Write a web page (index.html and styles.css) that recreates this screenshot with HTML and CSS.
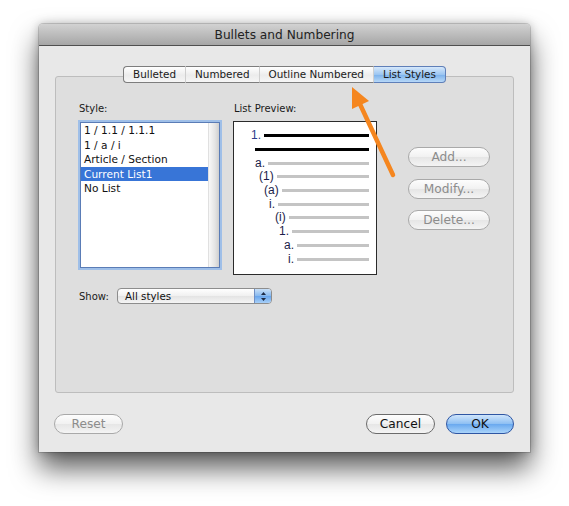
FILE: index.html
```html
<!DOCTYPE html>
<html lang="en">
<head>
    <meta charset="UTF-8">
    <title>Bullets and Numbering</title>
    <link rel="stylesheet" href="styles.css">
</head>
<body>

<div class="window">
    <div class="titlebar">Bullets and Numbering</div>
    <div class="content">
        <div class="tabs">
            <div class="tab">Bulleted</div>
            <div class="tab">Numbered</div>
            <div class="tab">Outline Numbered</div>
            <div class="tab selected">List Styles</div>
        </div>
        <div class="groupbox">
            <div class="columns">
                <div class="style-col">
                    <div class="label">Style:</div>
                    <div class="listbox">
                        <div class="items">
                            <div class="item">1 / 1.1 / 1.1.1</div>
                            <div class="item">1 / a / i</div>
                            <div class="item">Article / Section</div>
                            <div class="item selected">Current List1</div>
                            <div class="item">No List</div>
                        </div>
                        <div class="scrollbar"></div>
                    </div>
                </div>
                <div class="preview-col">
                    <div class="label">List Preview:</div>
                    <div class="preview">
                        <div class="prow lv1"><span class="num first">1.</span><span class="rule dark"></span></div>
                        <div class="prow lv2"><span class="rule dark"></span></div>
                        <div class="prow lv3"><span class="num">a.</span><span class="rule"></span></div>
                        <div class="prow lv4"><span class="num">(1)</span><span class="rule"></span></div>
                        <div class="prow lv5"><span class="num">(a)</span><span class="rule"></span></div>
                        <div class="prow lv6"><span class="num">i.</span><span class="rule"></span></div>
                        <div class="prow lv7"><span class="num">(i)</span><span class="rule"></span></div>
                        <div class="prow lv8"><span class="num">1.</span><span class="rule"></span></div>
                        <div class="prow lv9"><span class="num">a.</span><span class="rule"></span></div>
                        <div class="prow lv10"><span class="num">i.</span><span class="rule"></span></div>
                    </div>
                </div>
                <div class="side-buttons">
                    <button class="pill" disabled>Add...</button>
                    <button class="pill" disabled>Modify...</button>
                    <button class="pill" disabled>Delete...</button>
                </div>
            </div>
            <div class="show-row">
                <span class="label">Show:</span>
                <div class="popup">
                    <span class="popup-text">All styles</span>
                    <span class="stepper">
                        <svg width="7" height="11" viewBox="0 0 7 11">
                            <path d="M3.5 1 L6 4 L1 4 Z" fill="#1d2a45"/>
                            <path d="M3.5 10 L6 7 L1 7 Z" fill="#1d2a45"/>
                        </svg>
                    </span>
                </div>
            </div>
        </div>
        <div class="bottom-row">
            <button class="pill wide" disabled>Reset</button>
            <div class="spacer"></div>
            <button class="pill wide active">Cancel</button>
            <button class="pill wide default">OK</button>
        </div>
    </div>
</div>

<svg class="callout" width="569" height="506" viewBox="0 0 569 506">
    <line x1="393" y1="175" x2="359" y2="102" stroke="#f5861f" stroke-width="4.5" stroke-linecap="round"/>
    <polygon points="352,87 369,101 352,109" fill="#f5861f"/>
</svg>

</body>
</html>
```

FILE: styles.css
```css
html {
    background: #fff;
}

body {
    margin: 0;
    min-height: 506px;
    font-family: "DejaVu Sans", "Lucida Grande", sans-serif;
    color: #1a1a1a;
}

.window {
    width: 491px;
    height: 428px;
    margin: 24px 0 0 39px;
    background: #e8e8e8;
    border-radius: 4px 4px 0 0;
    box-shadow: 0 16px 28px rgba(0, 0, 0, 0.65), 0 0 10px rgba(0, 0, 0, 0.25), 0 0 0 1px rgba(0, 0, 0, 0.15);
    display: flex;
    flex-direction: column;
}

.titlebar {
    height: 22px;
    padding-top: 1px;
    line-height: 21px;
    box-sizing: border-box;
    text-align: center;
    font-size: 12.2px;
    color: #222;
    background: linear-gradient(#d2d2d2, #a6a6a6);
    border-bottom: 1px solid #4f4f4f;
    border-radius: 4px 4px 0 0;
}

.content {
    padding: 20px 16px 0 16px;
}

/* segmented tab control */
.tabs {
    position: relative;
    z-index: 1;
    display: flex;
    justify-content: center;
}
.tab {
    height: 15px;
    line-height: 15px;
    padding: 0 9px;
    font-size: 10.4px;
    background: linear-gradient(#ffffff, #ececec 55%, #f6f6f6);
    border-top: 1px solid #7d7d7d;
    border-bottom: 1px solid #7d7d7d;
    border-right: 1px solid #cfcfcf;
}
.tab:first-child {
    border-left: 1px solid #7d7d7d;
    border-radius: 4px 0 0 4px;
}
.tab:last-child {
    border-right: 1px solid #5f7fb8;
    border-radius: 0 4px 4px 0;
}
.tab.selected {
    background: linear-gradient(#d6e8fb, #9cc6f2 50%, #7fb4ec 55%, #b7d8f8);
    border-top-color: #5f7fb8;
    border-bottom-color: #5f7fb8;
}

.groupbox {
    margin-top: -7px;
    height: 315px;
    background: #dedede;
    border: 1px solid #bdbdbd;
    border-radius: 3px;
    padding: 0 0 0 22px;
}

.columns {
    display: flex;
    align-items: flex-start;
    padding-top: 25px;
}

.label {
    font-size: 10px;
    line-height: 13px;
    color: #1a1a1a;
    padding-left: 1px;
}

.style-col {
    width: 144px;
}
.listbox {
    margin: 7px 0 0 2px;
    width: 138px;
    height: 144px;
    background: #fff;
    border: 1px solid #5a7cb6;
    box-shadow: 0 0 0 2px #9fbfe8;
    display: flex;
}
.items {
    flex: 1;
}
.item {
    height: 14.6px;
    line-height: 14px;
    padding-left: 3px;
    font-size: 10.6px;
    color: #111;
    white-space: nowrap;
}
.item.selected {
    background: #3875d7;
    color: #fff;
}
.scrollbar {
    width: 10px;
    background: linear-gradient(90deg, #f8f8f8, #e4e4e4 60%, #cfcfcf);
    border-left: 1px solid #e0e0e0;
}

.preview-col {
    width: 144px;
    margin-left: 11px;
}
.preview {
    margin-top: 6px;
    height: 145px;
    background: #fff;
    border: 1px solid #2b2b2b;
    padding: 7px 7px 0 0;
}
.prow {
    display: flex;
    align-items: center;
    height: 13.7px;
    font-family: "Liberation Sans", Arial, sans-serif;
    font-size: 12px;
    color: #1c1d4a;
}
.num {
    margin-right: 3px;
    line-height: 13px;
}
.num.first {
    color: #2c3c8a;
}
.rule {
    flex: 1;
    height: 3px;
    background: #c4c4c4;
}
.rule.dark {
    background: #000;
}
.lv1 { padding-left: 17px; }
.lv2 { padding-left: 21px; }
.lv3 { padding-left: 21px; }
.lv4 { padding-left: 25px; }
.lv5 { padding-left: 30px; }
.lv6 { padding-left: 35px; }
.lv7 { padding-left: 41px; }
.lv8 { padding-left: 45px; }
.lv9 { padding-left: 50px; }
.lv10 { padding-left: 54px; }

.side-buttons {
    margin-left: 31px;
    padding-top: 45px;
    display: flex;
    flex-direction: column;
    gap: 11.5px;
}

.pill {
    width: 82px;
    height: 20px;
    padding: 0;
    font-family: "DejaVu Sans", "Lucida Grande", sans-serif;
    font-size: 12.2px;
    line-height: 18px;
    color: #8c8c8c;
    background: linear-gradient(#fdfdfd, #f1f1f1 50%, #e6e6e6 52%, #f4f4f4);
    border: 1px solid #a9a9a9;
    border-radius: 10px;
}
.pill.wide {
    width: 69px;
}
.pill.active {
    color: #111;
    border-color: #6b6b6b;
}
.pill.default {
    width: 68px;
    color: #111;
    border-color: #2f56a3;
    background: linear-gradient(#cfe5fb, #8fc0f3 48%, #6aa9ef 52%, #aad4fa);
}

.show-row {
    display: flex;
    align-items: center;
    margin-top: 13px;
}
.show-row .label {
    width: 38px;
}
.popup {
    width: 153px;
    height: 14px;
    display: flex;
    align-items: center;
    border: 1px solid #8d8d8d;
    border-radius: 4px;
    background: linear-gradient(#ffffff, #f0f0f0 50%, #e4e4e4 52%, #f5f5f5);
    overflow: hidden;
}
.popup-text {
    flex: 1;
    padding-left: 7px;
    font-size: 10.3px;
    color: #111;
}
.stepper {
    width: 16px;
    height: 14px;
    display: flex;
    align-items: center;
    justify-content: center;
    border-left: 1px solid #6f8fc4;
    background: linear-gradient(#c9e0f8, #86b8ee 50%, #69a5ec 52%, #a8d0f8);
}

.bottom-row {
    display: flex;
    align-items: center;
    gap: 11px;
    margin-top: 21px;
}
.bottom-row .pill:first-child {
    margin-left: -1px;
}
.spacer {
    flex: 1;
}

.callout {
    position: absolute;
    left: 0;
    top: 0;
    pointer-events: none;
}
```
